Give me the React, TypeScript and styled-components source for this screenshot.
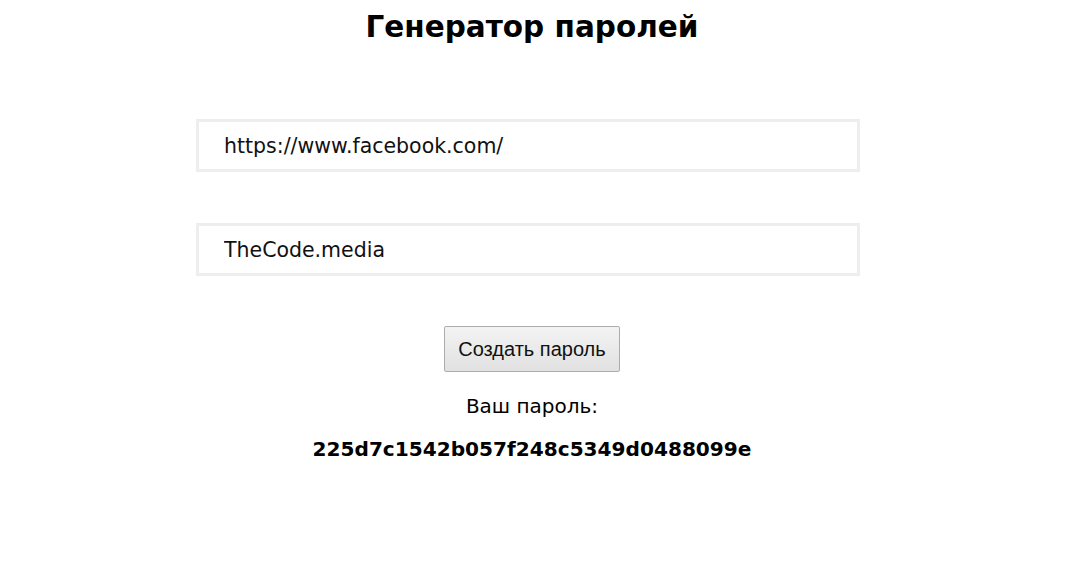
import React, { useState } from 'react';
import styled, { createGlobalStyle } from 'styled-components';

const GlobalStyle = createGlobalStyle`
  body {
    margin: 0;
    background: #fff;
    font-family: "DejaVu Sans", Verdana, sans-serif;
    color: #000;
  }
`;

const Page = styled.div`
  width: 1064px;
  padding-top: 9px;
  display: flex;
  flex-direction: column;
  align-items: center;
`;

const Title = styled.h1`
  margin: 0 0 74px;
  font-size: 29.5px;
  font-weight: bold;
  line-height: 36px;
`;

const Field = styled.input`
  box-sizing: border-box;
  width: 664px;
  height: 53px;
  margin: 0 8px 51px 0;
  padding: 0 25px;
  border: 3px solid #eeeeee;
  font-family: "DejaVu Sans", Verdana, sans-serif;
  font-size: 20.5px;
  color: #111;
  outline: none;
`;

const Button = styled.button`
  box-sizing: border-box;
  width: 176px;
  height: 46px;
  margin-top: -1px;
  border: 1px solid #acacac;
  border-radius: 2px;
  background: linear-gradient(#f3f3f3, #e1e1e1);
  font-family: "Liberation Sans", Arial, sans-serif;
  font-size: 20px;
  color: #111;
  cursor: pointer;
`;

const Label = styled.div`
  margin-top: 22px;
  font-size: 20px;
  line-height: 24px;
`;

const Password = styled.div`
  margin-top: 19px;
  font-size: 20.1px;
  font-weight: bold;
  line-height: 24px;
`;

export default function App() {
  const [site, setSite] = useState('https://www.facebook.com/');
  const [word, setWord] = useState('TheCode.media');

  return (
    <>
      <GlobalStyle />
      <Page>
        <Title>Генератор паролей</Title>
        <Field value={site} onChange={(e) => setSite(e.target.value)} />
        <Field value={word} onChange={(e) => setWord(e.target.value)} />
        <Button>Создать пароль</Button>
        <Label>Ваш пароль:</Label>
        <Password>225d7c1542b057f248c5349d0488099e</Password>
      </Page>
    </>
  );
}
